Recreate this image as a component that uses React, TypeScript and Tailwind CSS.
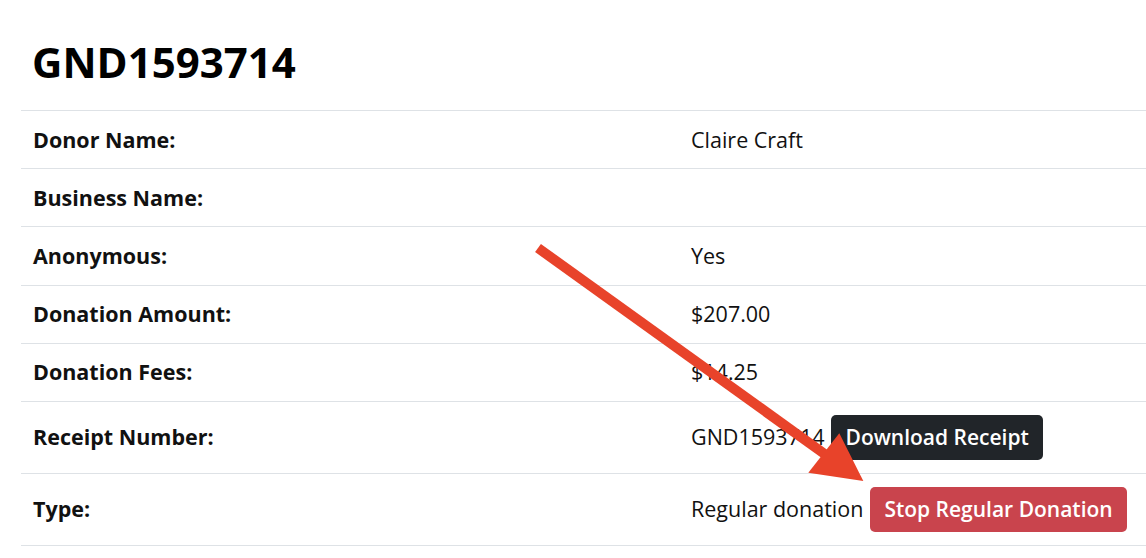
import React from "react";

const rows: { label: string; value: React.ReactNode; tall?: boolean }[] = [
  { label: "Donor Name:", value: "Claire Craft" },
  { label: "Business Name:", value: "" },
  { label: "Anonymous:", value: "Yes" },
  { label: "Donation Amount:", value: "$207.00" },
  { label: "Donation Fees:", value: "$14.25" },
  {
    label: "Receipt Number:",
    tall: true,
    value: (
      <div className="flex items-center gap-[7px]">
        <span>GND1593714</span>
        <button className="h-[45px] px-[14px] rounded-[5px] bg-[#212529] text-white text-[21px] font-semibold leading-[30px]">
          Download Receipt
        </button>
      </div>
    ),
  },
  {
    label: "Type:",
    tall: true,
    value: (
      <div className="flex items-center gap-[7px]">
        <span>Regular donation</span>
        <button className="h-[45px] px-[14px] rounded-[5px] bg-[#c9444d] text-white text-[21px] font-semibold leading-[30px]">
          Stop Regular Donation
        </button>
      </div>
    ),
  },
];

export default function App() {
  return (
    <div
      className="relative w-[1146px] h-[558px] overflow-hidden bg-white text-[#111]"
      style={{ fontFamily: '"Open Sans", "Noto Sans", sans-serif' }}
    >
      <div className="pl-[21px]">
        <h1 className="pt-[36px] pl-[11px] mb-[22px] text-[42px] leading-[52px] font-bold text-black">
          GND1593714
        </h1>
        <table className="w-full border-collapse border-t border-[#dee2e6] text-[21.5px] leading-[30px]">
          <tbody>
            {rows.map((r) => (
              <tr key={r.label} className="border-b border-[#dee2e6]">
                <td
                  className={`w-[657px] pl-[12px] align-middle font-bold ${
                    r.tall ? "py-[13px]" : "py-[13.6px]"
                  }`}
                >
                  {r.label}
                </td>
                <td
                  className={`pl-[13px] align-middle ${
                    r.tall ? "py-[13px]" : "py-[13.6px]"
                  }`}
                >
                  {r.value || "\u00a0"}
                </td>
              </tr>
            ))}
          </tbody>
        </table>
      </div>
      <svg
        className="absolute inset-0 pointer-events-none"
        width="1146"
        height="558"
        viewBox="0 0 1146 558"
      >
        <line
          x1="538"
          y1="248"
          x2="826"
          y2="455"
          stroke="#e8432a"
          strokeWidth="10"
        />
        <polygon points="839.3,433.3 808.3,472.7 863.3,481" fill="#e8432a" />
      </svg>
    </div>
  );
}
